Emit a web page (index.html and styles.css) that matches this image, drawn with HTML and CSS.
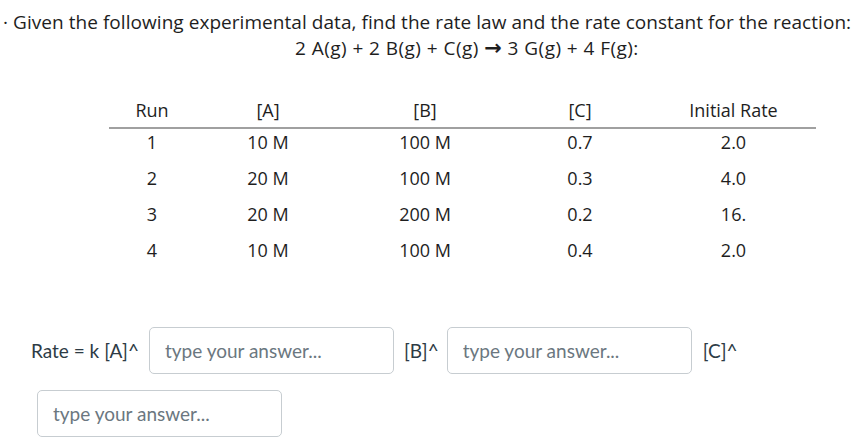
FILE: index.html
```html
<!DOCTYPE html>
<html>
<head>
<meta charset="utf-8">
<link rel="stylesheet" href="styles.css">
</head>
<body>
<div class="question">
  <p class="intro"><span class="bullet">·</span> Given the following experimental data, find the rate law and the rate constant for the reaction:</p>
  <p class="reaction">2 A(g) + 2 B(g) + C(g) <span class="arrow">→</span> 3 G(g) + 4 F(g):</p>
  <table class="data">
    <thead>
      <tr><th class="c-run">Run</th><th class="c-a">[A]</th><th class="c-b">[B]</th><th class="c-c">[C]</th><th class="c-r">Initial Rate</th></tr>
    </thead>
    <tbody>
      <tr><td>1</td><td>10 M</td><td>100 M</td><td>0.7</td><td>2.0</td></tr>
      <tr><td>2</td><td>20 M</td><td>100 M</td><td>0.3</td><td>4.0</td></tr>
      <tr><td>3</td><td>20 M</td><td>200 M</td><td>0.2</td><td>16.</td></tr>
      <tr><td>4</td><td>10 M</td><td>100 M</td><td>0.4</td><td>2.0</td></tr>
    </tbody>
  </table>
  <div class="answers">
    <span class="label lab-a">Rate = k [A]^</span>
    <input class="ans" type="text" placeholder="type your answer...">
    <span class="label lab-b">[B]^</span>
    <input class="ans" type="text" placeholder="type your answer...">
    <span class="label lab-c">[C]^</span>
  </div>
  <div class="answers second">
    <input class="ans" type="text" placeholder="type your answer...">
  </div>
</div>
</body>
</html>
```
FILE: styles.css
```css
html, body {
  margin: 0;
  padding: 0;
  background: #ffffff;
}
.intro {
  margin: 0;
  padding: 9px 0 0 3px;
  font-family: "Open Sans", sans-serif;
  font-size: 19px;
  letter-spacing: 0.05px;
  line-height: 26px;
  color: #1e1e1e;
  white-space: nowrap;
}
.reaction {
  margin: 0;
  padding: 0 0 0 295px;
  font-family: "Open Sans", sans-serif;
  font-size: 19px;
  letter-spacing: 0.45px;
  line-height: 26px;
  color: #1e1e1e;
  white-space: nowrap;
}
.arrow {
  font-family: "DejaVu Sans", sans-serif;
  font-weight: bold;
  font-size: 21px;
  line-height: 20px;
}
.data {
  margin: 32px 0 0 109px;
  border-collapse: collapse;
  font-family: "Open Sans", sans-serif;
  font-size: 18px;
  color: #1e1e1e;
}
.data th {
  font-weight: normal;
  height: 34px;
  padding: 0;
  border-bottom: 2px solid #a0a0a0;
  text-align: center;
}
.data td {
  height: 36px;
  padding: 0;
  vertical-align: top;
  line-height: 26px;
  text-align: center;
}
.c-run { width: 86px; }
.c-a { width: 146px; }
.c-b { width: 168px; }
.c-c { width: 142px; }
.c-r { width: 165px; }
.answers {
  display: flex;
  align-items: center;
  margin: 54px 0 0 31px;
  font-family: "Lato", sans-serif;
  font-size: 19px;
  color: #2d3b45;
}
.lab-a { margin-right: 10px; }
.lab-b { margin: 0 8px 0 10px; }
.lab-c { margin-left: 11px; }
.ans {
  box-sizing: border-box;
  width: 245px;
  height: 47px;
  margin: 0;
  padding: 0 15px;
  border: 1px solid #c7cdd1;
  border-radius: 5px;
  font-family: "Lato", sans-serif;
  font-size: 19px;
  color: #2d3b45;
  background: #fff;
  outline: none;
}
.ans::placeholder {
  color: #6b7780;
}
.second {
  margin: 16px 0 0 37px;
}
```
